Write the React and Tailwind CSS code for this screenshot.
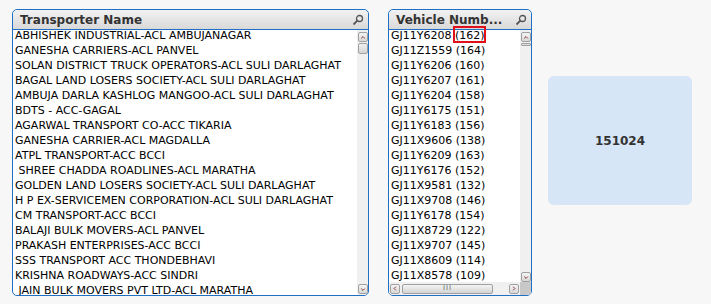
import React from 'react';

const transporters = [
  'ABHISHEK INDUSTRIAL-ACL AMBUJANAGAR',
  'GANESHA CARRIERS-ACL PANVEL',
  'SOLAN DISTRICT TRUCK OPERATORS-ACL SULI DARLAGHAT',
  'BAGAL LAND LOSERS SOCIETY-ACL SULI DARLAGHAT',
  'AMBUJA DARLA KASHLOG MANGOO-ACL SULI DARLAGHAT',
  'BDTS - ACC-GAGAL',
  'AGARWAL TRANSPORT CO-ACC TIKARIA',
  'GANESHA CARRIER-ACL MAGDALLA',
  'ATPL TRANSPORT-ACC BCCI',
  ' SHREE CHADDA ROADLINES-ACL MARATHA',
  'GOLDEN LAND LOSERS SOCIETY-ACL SULI DARLAGHAT',
  'H P EX-SERVICEMEN CORPORATION-ACL SULI DARLAGHAT',
  'CM TRANSPORT-ACC BCCI',
  'BALAJI BULK MOVERS-ACL PANVEL',
  'PRAKASH ENTERPRISES-ACC BCCI',
  'SSS TRANSPORT ACC THONDEBHAVI',
  'KRISHNA ROADWAYS-ACC SINDRI',
  ' JAIN BULK MOVERS PVT LTD-ACL MARATHA',
];

const vehicles = [
  ['GJ11Y6208', '162'],
  ['GJ11Z1559', '164'],
  ['GJ11Y6206', '160'],
  ['GJ11Y6207', '161'],
  ['GJ11Y6204', '158'],
  ['GJ11Y6175', '151'],
  ['GJ11Y6183', '156'],
  ['GJ11X9606', '138'],
  ['GJ11Y6209', '163'],
  ['GJ11Y6176', '152'],
  ['GJ11X9581', '132'],
  ['GJ11X9708', '146'],
  ['GJ11Y6178', '154'],
  ['GJ11X8729', '122'],
  ['GJ11X9707', '145'],
  ['GJ11X8609', '114'],
  ['GJ11X8578', '109'],
];

const font = { fontFamily: '"DejaVu Sans", Tahoma, sans-serif' };

const SearchIcon = () => (
  <svg width="12" height="12" viewBox="0 0 12 12">
    <circle cx="7.5" cy="4.5" r="3" fill="none" stroke="#555" strokeWidth="1.3" />
    <line x1="5.3" y1="6.7" x2="1.5" y2="10.5" stroke="#555" strokeWidth="1.8" />
  </svg>
);

const ArrowBtn = ({ dir }) => {
  const pts = {
    up: '2.5,5.5 4.5,3.5 6.5,5.5',
    down: '2.5,3.5 4.5,5.5 6.5,3.5',
    left: '5.5,2.5 3.5,4.5 5.5,6.5',
    right: '3.5,2.5 5.5,4.5 3.5,6.5',
  }[dir];
  return (
    <div className="w-[10px] h-[10px] border border-[#a0a0a0] rounded-[2px] bg-gradient-to-b from-[#f4f4f4] to-[#d8d8d8] flex items-center justify-center">
      <svg width="9" height="9" viewBox="0 0 9 9">
        <polyline points={pts} fill="none" stroke="#7a1f1f" strokeWidth="1" />
      </svg>
    </div>
  );
};

const Header = ({ title }) => (
  <div className="h-[20px] flex items-center justify-between pl-[7px] pr-[4px] bg-gradient-to-b from-[#f2f2f2] to-[#d9d9d9] border-b border-[#1f6fc5] rounded-t-[5px]">
    <span className="text-[12px] font-bold text-[#333] leading-none whitespace-nowrap">{title}</span>
    <SearchIcon />
  </div>
);

export default function App() {
  return (
    <div className="w-[711px] h-[304px] bg-[#f7f7f7] flex items-start pt-[9px] pl-[12px]" style={font}>
      {/* Transporter list */}
      <div className="w-[357px] h-[287px] border border-[#1f6fc5] rounded-[5px] bg-white flex flex-col overflow-hidden">
        <Header title="Transporter Name" />
        <div className="flex flex-1 min-h-0">
          <div className="flex-1 pl-[2px]">
            {transporters.map((t, i) => (
              <div key={i} className="h-[15px] text-[11px] leading-[11px] text-black whitespace-pre">{t}</div>
            ))}
          </div>
          <div className="w-[11px] bg-[#f0f0f0] flex flex-col items-center pt-[2px] pb-[1px]">
            <ArrowBtn dir="up" />
            <div className="w-[10px] h-[11px] mt-[1px] border border-[#a0a0a0] rounded-[2px] bg-gradient-to-b from-[#f0f0f0] to-[#d4d4d4]" />
            <div className="flex-1" />
            <ArrowBtn dir="down" />
          </div>
        </div>
      </div>

      {/* Vehicle list */}
      <div className="ml-[19px] w-[144px] h-[287px] border border-[#1f6fc5] rounded-[5px] bg-white flex flex-col overflow-hidden">
        <Header title="Vehicle Numb..." />
        <div className="flex flex-1 min-h-0">
          <div className="flex-1 pl-[2px]">
            {vehicles.map(([v, n], i) => (
              <div key={i} className="h-[15px] text-[11px] leading-[11px] text-black whitespace-nowrap flex">
                <span>{v}&nbsp;</span>
                <span className="relative">
                  ({n})
                  {i === 0 && (
                    <span className="absolute -top-[4px] -left-[2px] -right-[1px] h-[17px] border-2 border-[#e0101a]" />
                  )}
                </span>
              </div>
            ))}
          </div>
          <div className="w-[11px] bg-[#f0f0f0] flex flex-col items-center pt-[2px]">
            <ArrowBtn dir="up" />
            <div className="w-[10px] h-[3px] mt-[1px] border border-[#a0a0a0] rounded-[1px] bg-[#e0e0e0]" />
            <div className="flex-1" />
            <ArrowBtn dir="down" />
          </div>
        </div>
        <div className="h-[13px] flex items-center bg-[#f0f0f0] pl-[1px]">
          <ArrowBtn dir="left" />
          <div className="ml-[2px] w-[91px] h-[10px] border border-[#a0a0a0] rounded-[2px] bg-gradient-to-b from-[#f4f4f4] to-[#d4d4d4] flex items-center justify-center">
            <span className="text-[7px] leading-none text-[#666] tracking-[1px]">III</span>
          </div>
          <div className="flex-1" />
          <ArrowBtn dir="right" />
          <div className="w-[11px] h-[13px] ml-[1px] bg-[#c8c8c8]" />
        </div>
      </div>

      {/* KPI */}
      <div className="ml-[16px] mt-[67px] w-[144px] h-[129px] rounded-[6px] bg-[#d6e6f7] flex items-center justify-center">
        <span className="text-[12px] font-bold text-[#333]">151024</span>
      </div>
    </div>
  );
}
